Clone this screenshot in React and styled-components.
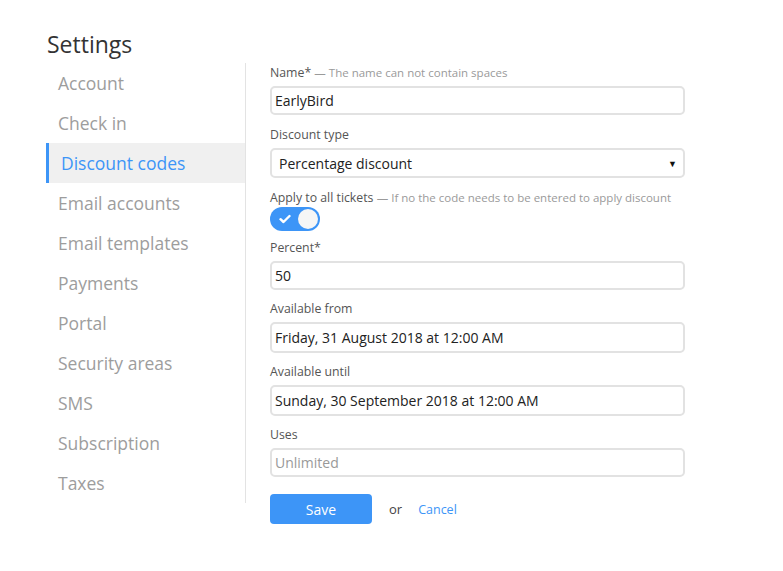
import React, { useState } from 'react';
import styled, { createGlobalStyle } from 'styled-components';

const GlobalStyle = createGlobalStyle`
  * { box-sizing: border-box; }
  body {
    margin: 0;
    background: #fff;
    font-family: 'Open Sans', 'Noto Sans', sans-serif;
    color: #333;
  }
`;

const blue = '#3d95f7';

const Page = styled.div`
  padding: 27px 0 0 46px;
`;

const Title = styled.h1`
  margin: 0 0 2px 1px;
  font-size: 23px;
  font-weight: 400;
  line-height: 34px;
  color: #333;
`;

const Layout = styled.div`
  display: flex;
  align-items: flex-start;
`;

const Sidebar = styled.nav`
  width: 200px;
  border-right: 1px solid #e3e3e3;
  display: flex;
  flex-direction: column;
`;

const NavItem = styled.div`
  height: 40px;
  display: flex;
  align-items: center;
  padding-left: 12px;
  border-left: 3px solid ${(p) => (p.$active ? blue : 'transparent')};
  margin-left: ${(p) => (p.$active ? '0' : '-3px')};
  background: ${(p) => (p.$active ? '#f0f0f0' : 'transparent')};
  color: ${(p) => (p.$active ? blue : '#9d9d9d')};
  font-size: 17.5px;
  cursor: pointer;
`;

const Form = styled.form`
  width: 415px;
  margin-left: 24px;
  padding-top: 2px;
`;

const Field = styled.div`
  margin-bottom: ${(p) => p.$mb || '11px'};
`;

const Label = styled.div`
  font-size: 12.3px;
  line-height: 16px;
  color: #555;
  margin-bottom: ${(p) => p.$mb || '5px'};
  white-space: nowrap;
`;

const Hint = styled.span`
  font-size: 11.5px;
  color: #9a9a9a;
`;

const Input = styled.input`
  display: block;
  width: 100%;
  height: ${(p) => p.$h || '30px'};
  border: 2px solid #e2e2e2;
  border-radius: 5px;
  padding: 0 3px;
  font-family: inherit;
  font-size: 14px;
  color: #222;
  outline: none;
  &::placeholder {
    color: #999;
  }
`;

const SelectWrap = styled.div`
  position: relative;
`;

const Select = styled.select`
  display: block;
  width: 100%;
  height: 30px;
  border: 2px solid #e2e2e2;
  border-radius: 5px;
  padding: 0 7px;
  font-family: inherit;
  font-size: 14px;
  color: #222;
  background: #fff;
  appearance: none;
  outline: none;
`;

const Caret = styled.span`
  position: absolute;
  right: 8px;
  top: 50%;
  transform: translateY(-50%);
  font-size: 9px;
  color: #111;
  pointer-events: none;
`;

const Toggle = styled.button`
  width: 50px;
  height: 24px;
  border: none;
  border-radius: 12px;
  background: ${(p) => (p.$on ? blue : '#ccc')};
  padding: 2px;
  display: flex;
  align-items: center;
  justify-content: space-between;
  cursor: pointer;
`;

const Check = styled.svg`
  margin-left: 7px;
`;

const Knob = styled.span`
  width: 20px;
  height: 20px;
  border-radius: 50%;
  background: #f6f6f6;
`;

const Actions = styled.div`
  display: flex;
  align-items: center;
  margin-top: 17px;
`;

const SaveButton = styled.button`
  width: 102px;
  height: 30px;
  border: none;
  border-radius: 4px;
  background: ${blue};
  color: #fff;
  font-family: inherit;
  font-size: 14px;
  cursor: pointer;
`;

const Or = styled.span`
  margin-left: 17px;
  font-size: 13px;
  color: #444;
`;

const CancelLink = styled.a`
  margin-left: 16px;
  font-size: 12.5px;
  color: ${blue};
  text-decoration: none;
  cursor: pointer;
`;

const navItems = [
  'Account',
  'Check in',
  'Discount codes',
  'Email accounts',
  'Email templates',
  'Payments',
  'Portal',
  'Security areas',
  'SMS',
  'Subscription',
  'Taxes',
];

export default function App() {
  const [applyAll, setApplyAll] = useState(true);

  return (
    <Page>
      <GlobalStyle />
      <Title>Settings</Title>
      <Layout>
        <Sidebar>
          {navItems.map((item) => (
            <NavItem key={item} $active={item === 'Discount codes'}>
              {item}
            </NavItem>
          ))}
        </Sidebar>
        <Form onSubmit={(e) => e.preventDefault()}>
          <Field $mb="12px">
            <Label>
              Name* <Hint>— The name can not contain spaces</Hint>
            </Label>
            <Input defaultValue="EarlyBird" $h="29px" />
          </Field>
          <Field $mb="12px">
            <Label>Discount type</Label>
            <SelectWrap>
              <Select defaultValue="percentage">
                <option value="percentage">Percentage discount</option>
                <option value="fixed">Fixed amount</option>
              </Select>
              <Caret>▼</Caret>
            </SelectWrap>
          </Field>
          <Field $mb="9px">
            <Label $mb="1px">
              Apply to all tickets{' '}
              <Hint>— If no the code needs to be entered to apply discount</Hint>
            </Label>
            <Toggle type="button" $on={applyAll} onClick={() => setApplyAll(!applyAll)}>
              <Check width="12" height="10" viewBox="0 0 12 10">
                <path d="M1.5 5.2 L4.5 8 L10.5 2" fill="none" stroke="#fff" strokeWidth="2.4" strokeLinecap="round" strokeLinejoin="round" />
              </Check>
              <Knob />
            </Toggle>
          </Field>
          <Field $mb="11px">
            <Label>Percent*</Label>
            <Input defaultValue="50" $h="29px" />
          </Field>
          <Field $mb="11px">
            <Label>Available from</Label>
            <Input defaultValue="Friday, 31 August 2018 at 12:00 AM" $h="31px" />
          </Field>
          <Field $mb="11px">
            <Label>Available until</Label>
            <Input defaultValue="Sunday, 30 September 2018 at 12:00 AM" $h="31px" />
          </Field>
          <Field $mb="0">
            <Label>Uses</Label>
            <Input placeholder="Unlimited" $h="29px" />
          </Field>
          <Actions>
            <SaveButton type="submit">Save</SaveButton>
            <Or>or</Or>
            <CancelLink>Cancel</CancelLink>
          </Actions>
        </Form>
      </Layout>
    </Page>
  );
}
